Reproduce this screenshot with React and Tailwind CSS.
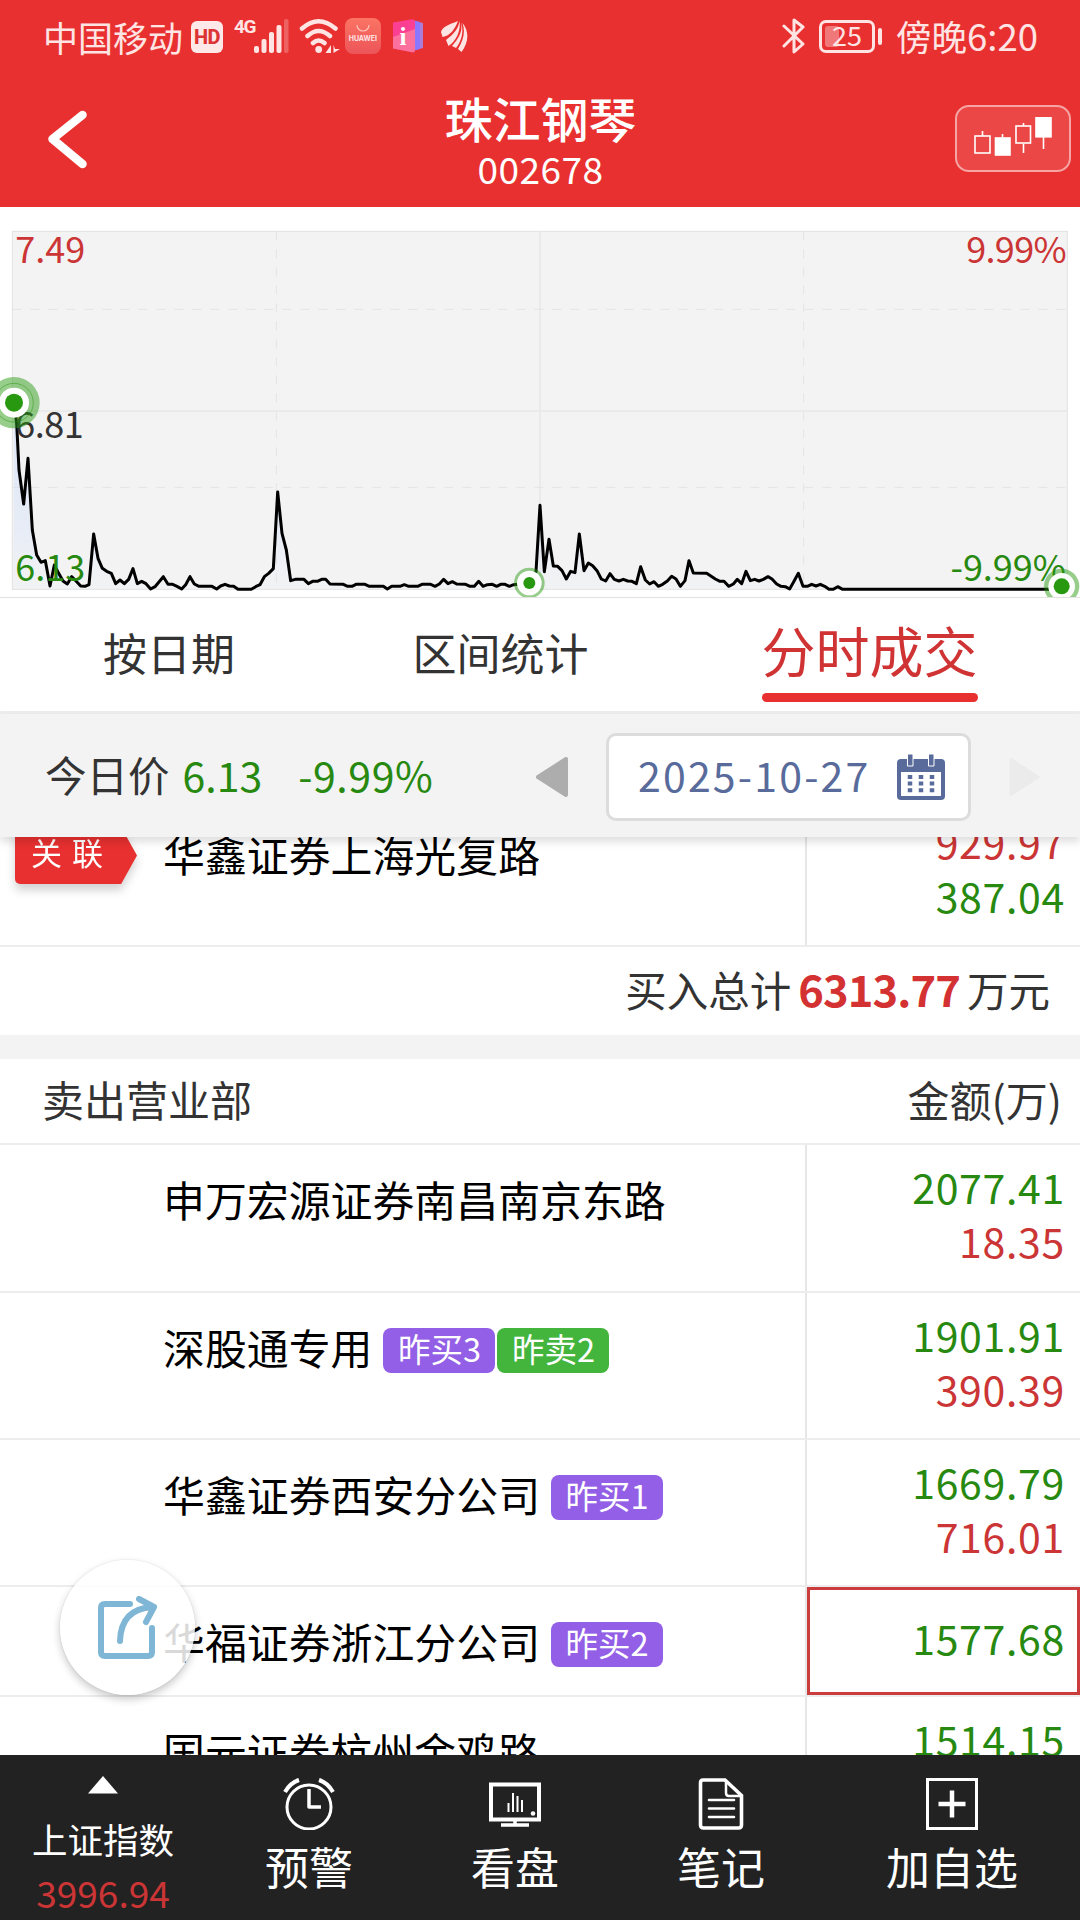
import React from "react";
import clsx from "clsx";

// Intraday line, three units per pixel
const LINE =
	"42,578 50,640 57,780 71,882 84,745 97,960 110,1035 123,1057 136,1052 150,1128 163,1065 176,1090 189,1113 202,1122 215,1100 228,1113 242,1128 255,1129 267,1124 281,972 294,1045 307,1075 320,1084 334,1090 347,1121 360,1110 373,1121 386,1108 399,1076 412,1121 425,1114 438,1121 452,1137 465,1130 490,1100 504,1123 518,1123 531,1129 545,1137 557,1124 570,1100 583,1122 597,1129 636,1129 650,1137 662,1128 675,1123 688,1128 701,1129 714,1138 754,1138 767,1130 780,1124 793,1100 806,1090 820,1076 833,846 846,970 859,1020 872,1112 886,1108 912,1108 925,1121 938,1114 952,1114 965,1108 977,1108 990,1122 1030,1123 1043,1129 1056,1129 1068,1123 1095,1123 1108,1129 1150,1129 1162,1137 1175,1129 1200,1129 1213,1124 1226,1129 1253,1129 1266,1123 1292,1123 1305,1129 1318,1122 1331,1108 1344,1121 1357,1115 1370,1122 1397,1123 1410,1129 1423,1129 1436,1114 1449,1129 1462,1124 1477,1123 1490,1129 1502,1123 1515,1123 1528,1129 1541,1124 1588,1119 1608,1085 1620,886 1633,1085 1647,988 1660,1068 1673,1069 1686,1082 1699,1107 1712,1084 1725,1088 1738,972 1752,1082 1765,1059 1778,1067 1791,1082 1804,1107 1817,1113 1830,1091 1843,1108 1857,1113 1870,1108 1883,1113 1896,1114 1909,1121 1922,1070 1936,1110 1949,1122 1962,1115 1975,1129 1988,1123 2002,1113 2015,1099 2028,1107 2041,1129 2055,1112 2067,1052 2080,1089 2120,1090 2146,1107 2160,1114 2172,1114 2186,1129 2200,1122 2212,1108 2225,1121 2238,1084 2251,1112 2264,1108 2277,1113 2290,1108 2304,1100 2316,1107 2330,1122 2343,1129 2356,1130 2369,1137 2382,1114 2395,1090 2409,1129 2422,1129 2435,1123 2448,1128 2461,1123 2474,1129 2487,1138 2500,1138 2513,1130 2528,1138 3185,1138";

const SELLERS = [
	{ name: "申万宏源证券南昌南京东路", tags: [], sell: "2077.41", buy: "18.35" },
	{
		name: "深股通专用",
		tags: [
			{ label: "昨买3", type: "buy" },
			{ label: "昨卖2", type: "sell" },
		],
		sell: "1901.91",
		buy: "390.39",
	},
	{ name: "华鑫证券西安分公司", tags: [{ label: "昨买1", type: "buy" }], sell: "1669.79", buy: "716.01" },
	{ name: "华福证券浙江分公司", tags: [{ label: "昨买2", type: "buy" }], sell: "1577.68", active: true },
	{ name: "国元证券杭州金鸡路", tags: [], sell: "1514.15" },
];

const StatusBar = () => (
	<div className="flex h-[72px] items-center pl-[43px] pr-[42px] text-[#ffe4e4]">
		<span className="text-[35px] leading-none">中国移动</span>
		<span className="ml-[8px] mt-px flex h-[32px] w-[32px] items-center justify-center rounded-[6px] bg-[#ffe8e8] font-['Roboto',sans-serif] text-[20px] font-extrabold tracking-tight text-[#dc3434]">
			HD
		</span>
		<div className="ml-[11px] flex h-[34px] items-start">
			<span className="font-['Roboto',sans-serif] text-[19px] font-bold leading-[16px] tracking-[-1.5px]">4G</span>
			<svg className="-ml-px h-[34px] w-[36px]" viewBox="0 0 36 34" fill="currentColor">
				<rect x="0" y="27" width="5" height="7" rx="2" />
				<rect x="7.500" y="20" width="5" height="14" rx="2" />
				<rect x="15" y="13" width="5" height="21" rx="2" />
				<rect x="22.500" y="6" width="5" height="28" rx="2" />
				<rect x="30" y="0" width="4.500" height="34" rx="2" opacity="0.280" />
			</svg>
		</div>
		<svg className="ml-[9px] h-[36px] w-[42px]" viewBox="0 0 42 36" fill="none" stroke="currentColor" strokeWidth="4.500" strokeLinecap="round">
			<path d="M3 10.500Q19.500 -4 36.500 10.500M8.500 18Q19.500 8 31 18M14 25Q19.500 20 25.500 25" />
			<circle cx="19.700" cy="31.500" r="3.400" fill="currentColor" stroke="none" />
			<path d="M32 27v8h-5.500zM34.500 35v-8l1.500 4h5z" fill="currentColor" stroke="none" />
		</svg>
		<span className="ml-[4px] flex h-[36px] w-[36px] flex-col items-center rounded-[8px] bg-gradient-to-b from-[#fb7464] to-[#ec5459]">
			<svg className="mt-[6px] h-[9px] w-[14px]" viewBox="0 0 14 9" fill="none" stroke="#ffc2b8" strokeWidth="1.200">
				<path d="M1 1a6 6 0 0 0 12 0" />
			</svg>
			<span className="mt-[2px] font-['Inter',sans-serif] text-[7px] font-bold leading-[8px]">HUAWEI</span>
		</span>
		<svg className="ml-[12px] h-[34px] w-[31px]" viewBox="0 0 31 34">
			<path d="M22 2l8 2v25l-8 2z" fill="#ab7cd6" />
			<path d="M19 1l8 2v27l-8 2z" fill="#8a76ff" />
			<path d="M0 3.500L19 0.300q3 0 3 3v28q0 2.500-3 2L0 29.500z" fill="#fb3f93" />
			<path d="M0 18l22-8v21q0 3-3 2.300L0 29.500z" fill="#fb86a0" opacity="0.700" />
			<text x="10" y="25.500" textAnchor="middle" fontFamily="Liberation Serif, serif" fontSize="25" fontWeight="bold" fill="#fff">i</text>
		</svg>
		<svg className="ml-[17px] h-[31px] w-[27px]" viewBox="0 0 27 31" fill="currentColor">
			<path d="M17 0C9 3 1 6 0 11l1.500 5C9 15 14 8 17 0z" />
			<path d="M18.500 0c-1 8-6 13-13.500 19l2.500 6C15 20 20 10 18.500 0z" />
			<path d="M20 1c2 9-2 16-9 24l4 2C21 20 23 9 20 1z" />
			<path d="M21.500 2c3 9 1 17-4.500 26l3.500 3c6-8 9-19 1-29z" />
		</svg>
		<div className="ml-auto flex items-center">
			<svg className="h-[38px] w-[24px]" viewBox="0 0 24 38" fill="none" stroke="currentColor" strokeWidth="3" strokeLinecap="round" strokeLinejoin="round">
				<path d="M2 9l19 18-9 8V3l9 7L2 29" />
			</svg>
			<span className="relative ml-[13px] flex h-[33px] w-[56px] items-center justify-center rounded-[7px] border-3 border-current">
				<span className="absolute left-[3px] top-[3px] h-[21px] w-[14px] rounded-[3px] bg-white/35" />
				<span className="relative pb-[3px] text-[27px] leading-none">25</span>
			</span>
			<span className="ml-[3px] h-[17px] w-[4px] rounded-full bg-current" />
			<span className="ml-[14px] text-[35.500px] leading-none">
				傍晚<span className="text-[36.500px]">6:20</span>
			</span>
		</div>
	</div>
);

const Header = () => (
	<header className="h-[207px] shrink-0 bg-[#e83030]">
		<StatusBar />
		<div className="flex h-[135px] items-center justify-between pl-[48px] pr-[9px]">
			<svg className="h-[60px] w-[102px]" viewBox="0 0 102 60" fill="none" stroke="#fff" strokeWidth="8.500" strokeLinecap="round" strokeLinejoin="round">
				<path d="M34.500 5L4.500 29L34.500 54" />
			</svg>
			<div className="flex flex-col items-center pr-[24px] pt-[4px] text-white">
				<h1 className="text-[48px] font-medium leading-[52px]">珠江钢琴</h1>
				<p className="text-[37px] leading-[50px] tracking-[0.5px]">002678</p>
			</div>
			<div className="mb-[2px] flex h-[67px] w-[116px] items-center justify-center rounded-[14px] border-2 border-[#f6a4a4] bg-[#ec4747] pb-[3px]">
				<svg className="h-[40px] w-[78px]" viewBox="0 0 78 40" fill="none" stroke="#fff" strokeWidth="1.600">
					<rect x="1" y="19" width="15" height="17" />
					<path d="M8.500 14v5M28.500 17v4M49.500 6v3M49.500 27v9M69.500 20v12" />
					<rect x="21.500" y="21" width="14.500" height="17" fill="#fff" />
					<rect x="42" y="9" width="14.500" height="17" />
					<rect x="62" y="0.800" width="15" height="19" fill="#fff" />
				</svg>
			</div>
		</div>
	</header>
);

const Marker = ({ x, y, halo, ring, core }) => (
	<g>
		<circle cx={x} cy={y} r={halo} fill="#27980f" opacity="0.48" />
		<circle cx={x} cy={y} r={ring} fill="#fff" />
		<circle cx={x} cy={y} r={core} fill="#27980f" />
	</g>
);

const Chart = () => (
	<svg className="block h-[391px] w-full shrink-0 border-b border-[#e2e2e2] bg-white" viewBox="0 -9 3240 1170" preserveAspectRatio="none">
		<defs>
			<linearGradient id="area" x1="0" y1="0" x2="0" y2="1">
				<stop offset="0" stopColor="#b4ccff" stopOpacity="0.350" />
				<stop offset="0.700" stopColor="#c4d8ff" stopOpacity="0.250" />
				<stop offset="1" stopColor="#d8e6ff" stopOpacity="0.050" />
			</linearGradient>
		</defs>
		<rect x="37" y="64" width="3165" height="1074" fill="#f3f3f3" stroke="#e2e2e2" strokeWidth="3" />
		<path d="M37 603H3202M1620 64V1138" stroke="#eaeaea" strokeWidth="6" />
		<path d="M37 298H3202M37 832H3202M829 64V1138M2411 64V1138" stroke="#e4e4e4" strokeWidth="3" strokeDasharray="27 27" />
		<polygon points={`${LINE} 3185,1138 42,1138`} fill="url(#area)" />
		<polyline points={LINE} fill="none" stroke="#000" strokeWidth="9" strokeLinejoin="round" />
		<g fontSize="108">
			<text x="46" y="159" fill="#cb3535">7.49</text>
			<text x="46" y="683" fill="#333" letterSpacing="-1.500">6.81</text>
			<text x="46" y="1112" fill="#27890f">6.13</text>
			<text x="3198" y="159" textAnchor="end" fill="#cb3535" letterSpacing="-2">9.99%</text>
			<text x="3198" y="1112" textAnchor="end" fill="#27890f">-9.99%</text>
		</g>
		<Marker x={42} y={578} halo={77} ring={45} core={27} />
		<circle cx="42" cy="578" r="58" fill="none" stroke="#27980f" strokeWidth="3" opacity="0.500" />
		<Marker x={1588} y={1119} halo={46} ring={37} core={18} />
		<Marker x={3185} y={1129} halo={53} ring={40} core={24} />
	</svg>
);

const Tabs = () => (
	<div className="flex h-[116px] shrink-0 border-b-3 border-[#ededed] bg-white text-[44px] text-[#333]">
		<div className="flex w-[338px] items-center justify-center pb-[5px]">按日期</div>
		<div className="flex w-[325px] items-center justify-center pb-[5px]">区间统计</div>
		<div className="flex flex-1 flex-col items-center pr-[4px] text-[54px] leading-[64px] text-[#cf3333]">
			<span className="mt-[20px]">分时成交</span>
			<span className="mt-[11px] h-[9px] w-[216px] rounded-full bg-[#e83030]" />
		</div>
	</div>
);

const DateBar = () => (
	<div className="relative z-10 flex h-[123px] shrink-0 items-center bg-[#f3f3f3] pl-[45px] pr-[40px] pt-[2px] shadow-[0_5px_8px_rgba(0,0,0,0.13)]">
		<span className="pb-[4px] text-[41.500px] text-[#333]">今日价</span>
		<span className="ml-[13px] pb-[4px] text-[41px] text-[#27890f]">6.13</span>
		<span className="ml-[36px] pb-[4px] text-[41px] tracking-[0.600px] text-[#27890f]">-9.99%</span>
		<svg className="ml-auto h-[40px] w-[32px]" viewBox="0 0 32 40">
			<path d="M30 2v36L2 20z" fill="#adadad" stroke="#adadad" strokeWidth="4" strokeLinejoin="round" />
		</svg>
		<button className="ml-[38px] flex h-[88px] w-[365px] items-center rounded-[10px] border-3 border-[#dcdcdc] bg-white pl-[29px] pr-[23px] text-[#586b9b]">
			<span className="pb-[4px] text-[41px] leading-none tracking-[2.200px]">2025-10-27</span>
			<svg className="ml-auto h-[46px] w-[48px]" viewBox="0 0 48 46">
				<rect x="0" y="5" width="48" height="41" rx="4" fill="#586b9b" />
				<rect x="4" y="18" width="40" height="24" fill="#fff" />
				<path d="M10.500 0h5.500v12h-5.500zM31.500 0h5.500v12h-5.500z" fill="#586b9b" stroke="#fff" strokeWidth="1" />
				<path d="M13 21v18M24 21v18M35 21v18" stroke="#586b9b" strokeWidth="4.500" strokeDasharray="4 2.600" />
			</svg>
		</button>
		<svg className="ml-[38px] h-[40px] w-[31px]" viewBox="0 0 32 40">
			<path d="M2 2v36L30 20z" fill="#ebebeb" stroke="#ebebeb" strokeWidth="3" strokeLinejoin="round" />
		</svg>
	</div>
);

const Row = ({ name, tags, first, second, firstClass, secondClass, active, badge }) => (
	<div className={clsx("flex shrink-0 border-b-2 border-[#ededed]", active ? "h-[110px]" : "h-[147.300px]")}>
		<div className="flex w-[163px] shrink-0 pl-[15px] pt-[27px]">
			{badge && (
				<div className="h-[57px] w-[122px] drop-shadow-[0_6px_5px_rgba(0,0,0,0.18)]">
					<div className="h-full rounded-[5px] bg-[#e83030] pl-[16px] text-[31px] leading-[50px] tracking-[10px] text-white [clip-path:polygon(0_0,87%_0,100%_50%,87%_100%,0_100%)]">
						{badge}
					</div>
				</div>
			)}
		</div>
		<div className="flex h-[86px] flex-1 items-center text-[41.900px] leading-[44px] text-black">
			<span className="pt-[22px]">{name}</span>
			<div className="ml-[11px] flex gap-[2px] pt-[29px]">
				{tags.map((tag) => (
					<span
						key={tag.label}
						className={clsx(
							"flex h-[45px] w-[112px] items-center justify-center rounded-[8px] pb-[5px] text-[32.500px] text-white",
							tag.type === "buy" ? "bg-[#935fe6]" : "bg-[#43b43c]"
						)}
					>
						{tag.label}
					</span>
				))}
			</div>
		</div>
		<div
			className={clsx(
				"w-[275px] shrink-0 border-l-2 border-[#e6e6e6] text-right text-[41px] leading-[54px] tracking-[0.700px]",
				active ? "" : "pr-[15px] pt-[14px]"
			)}
		>
			{active ? (
				<div className={clsx("h-[108px] border-3 border-[#cb3c3c] pr-[12px] pt-[20px]", firstClass)}>{first}</div>
			) : (
				<>
					<div className={firstClass}>{first}</div>
					<div className={secondClass}>{second}</div>
				</>
			)}
		</div>
	</div>
);

const NavItem = ({ label, children }) => (
	<div className="flex w-[206px] flex-col items-center pt-[23px] last:w-[256px]">
		<svg className="h-[52px] w-[52px]" viewBox="0 0 52 52" fill="none" stroke="#fff" strokeWidth="3">
			{children}
		</svg>
		<span className="mt-[10px] text-[44px] leading-[52px]">{label}</span>
	</div>
);

const BottomNav = () => (
	<nav className="z-10 flex h-[165px] shrink-0 bg-[#222] text-white">
		<div className="flex w-[206px] flex-col items-center pt-[20px]">
			<svg className="h-[20px] w-[30px]" viewBox="0 0 30 20">
				<path d="M15 1L30 18.500H0z" fill="#fff" />
			</svg>
			<span className="mt-[22px] text-[35.500px] leading-[44px]">上证指数</span>
			<span className="mt-[6px] text-[37px] leading-[50px] text-[#cb3535]">3996.94</span>
		</div>
		<NavItem label="预警">
			<circle cx="26" cy="29" r="22" />
			<path d="M26 11v18h12" strokeWidth="3.500" strokeLinejoin="round" />
			<path d="M2 14Q7 5 16 2M50 14Q45 5 36 2" strokeWidth="4" />
		</NavItem>
		<NavItem label="看盘">
			<path d="M2 6.500h48v35H2z" strokeWidth="4" />
			<path d="M26 42v5M12 47h28" strokeWidth="3.500" />
			<path d="M19.500 25v9M24 15v19M28.500 18v16M33 22v12" strokeWidth="2" />
			<circle cx="44" cy="35.500" r="2.300" fill="#fff" stroke="none" />
		</NavItem>
		<NavItem label="笔记">
			<path d="M8 2h22L46.500 17.500v29.500q0 3-3 3h-35q-3 0-3-3V5q0-3 2.500-3z" strokeWidth="3.600" />
			<path d="M31 3v12q0 3 3 3h11" strokeWidth="2.500" />
			<path d="M14 22h25M14 30.500h25M14 39h25" strokeWidth="2.600" strokeLinecap="round" />
		</NavItem>
		<NavItem label="加自选">
			<path d="M1.500 1.500h49v49h-49z" />
			<path d="M26 12.500v27M12.500 26h27" strokeWidth="4.500" />
		</NavItem>
	</nav>
);

const App = () => {
	return (
		<div className="relative flex h-[1920px] w-[1080px] flex-col overflow-hidden bg-white font-['Noto_Sans_CJK_SC',sans-serif]">
			<Header />
			<Chart />
			<Tabs />
			<DateBar />

			<main className="flex min-h-0 flex-1 flex-col overflow-hidden">
				<div className="-mt-[37px] shrink-0">
					<Row
						name="华鑫证券上海光复路"
						tags={[]}
						badge="关联"
						first="929.97"
						second="387.04"
						firstClass="text-[#cb3535]"
						secondClass="text-[#27890f]"
					/>
				</div>
				<div className="flex h-[88px] shrink-0 items-center justify-end pb-[5px] pr-[30px] text-[41.500px] text-[#333]">
					买入总计
					<span className="mx-[7px] text-[43.500px] font-bold tracking-[-0.900px] text-[#d43232]">6313.77</span>
					万元
				</div>
				<div className="h-[24px] shrink-0 bg-[#f3f3f3]" />
				<div className="flex h-[86px] shrink-0 items-center justify-between border-b-2 border-[#ededed] pb-[6px] pl-[42px] pr-[18px] text-[42px] text-[#333]">
					<span>卖出营业部</span>
					<span>金额(万)</span>
				</div>
				{SELLERS.map((row) => (
					<Row
						key={row.name}
						name={row.name}
						tags={row.tags}
						first={row.sell}
						second={row.buy}
						active={row.active}
						firstClass="text-[#27890f]"
						secondClass="text-[#cb3535]"
					/>
				))}
			</main>

			<BottomNav />

			{/* Floating share button */}
			<button className="absolute left-[60px] top-[1560px] z-20 flex h-[135px] w-[135px] items-center justify-center rounded-full bg-white/85 shadow-[0_4px_9px_rgba(0,0,0,0.22),0_0_2px_rgba(0,0,0,0.12)]">
				<svg className="h-[64px] w-[60px]" viewBox="0 0 60 64" fill="none" stroke="#7fb6d5" strokeWidth="6" strokeLinecap="round" strokeLinejoin="round">
					<path d="M32 8H7Q3 8 3 12V56Q3 60 7 60H50Q54 60 54 56V32" />
					<path d="M22 45Q23 13 54 11M41 3L56 11L48 26" />
				</svg>
			</button>
		</div>
	);
};

export default App;
